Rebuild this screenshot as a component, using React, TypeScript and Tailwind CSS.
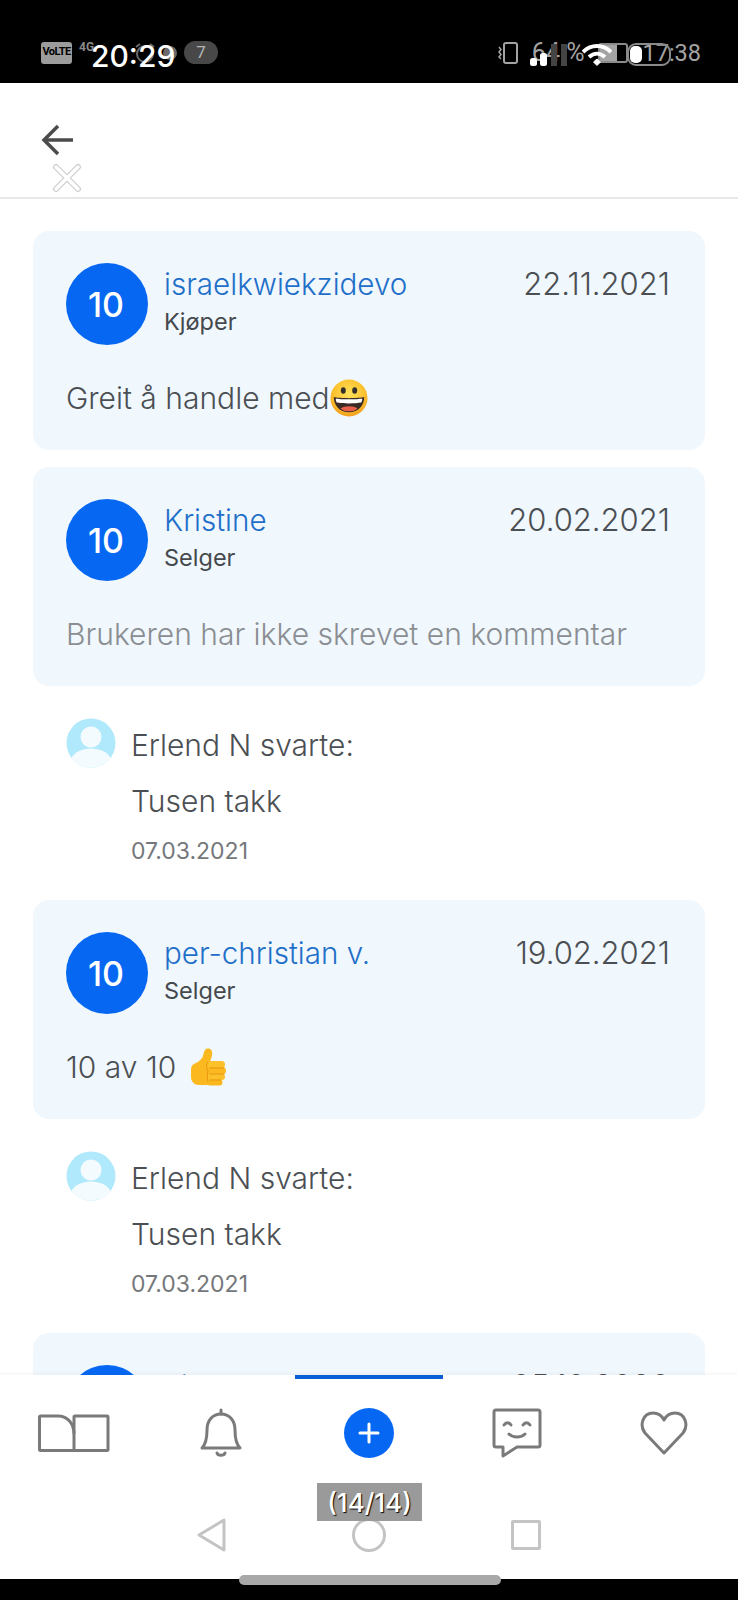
const font = { fontFamily: 'Inter, "Noto Sans", sans-serif' }

function Grin() {
  return (
    <svg width="38" height="38" viewBox="0 0 40 40" className="shrink-0">
      <defs>
        <radialGradient id="grin" cx="50%" cy="40%" r="60%">
          <stop offset="0%" stopColor="#fde15c" />
          <stop offset="70%" stopColor="#fcc22f" />
          <stop offset="100%" stopColor="#f29d1c" />
        </radialGradient>
      </defs>
      <circle cx="20" cy="20" r="19.500" fill="url(#grin)" />
      <ellipse cx="14" cy="12" rx="2.600" ry="3.400" fill="#33302c" />
      <ellipse cx="26" cy="12" rx="2.600" ry="3.400" fill="#33302c" />
      <path d="M4 19c5 1.600 27 1.600 32 0c0 9-6 16-16 16S4 28 4 19z" fill="#3a2a25" />
      <path d="M6 20.500c5 1.200 23 1.200 28 0c0 1.500-.3 3-1 4.300c-6 1.200-20 1.200-26 0c-.7-1.300-1-2.800-1-4.300z" fill="#fff" />
      <path d="M11 31c4-3 14-3 18 0c-2.200 2-5.500 3-9 3s-6.800-1-9-3z" fill="#e8604c" />
    </svg>
  )
}

function Thumb() {
  return (
    <svg width="36" height="38" viewBox="0 0 36 38" className="shrink-0">
      <path d="M1 21c0-3 2-5 5-6c3-1.500 6-4 7-7c.8-2.500 1-7 4.500-7.500c3.500-.4 5 2.500 4.700 5.500c-.2 2.500-1.200 5-2 7H22v24H9c-4.500 0-8-3.500-8-8z" fill="#fbb81f" />
      <rect x="17" y="13" width="18" height="7" rx="3.500" fill="#fcc02a" />
      <rect x="17" y="19.500" width="19" height="6.500" rx="3.250" fill="#fbb81f" />
      <rect x="17" y="25.500" width="18" height="6.500" rx="3.250" fill="#fcc02a" />
      <rect x="17" y="31.500" width="15.500" height="6" rx="3" fill="#fbb81f" />
      <path d="M20 20h14M20 26h14M20 32h11" stroke="#e8960f" strokeWidth="1" strokeLinecap="round" fill="none" />
      <path d="M18 14c-2 3-2 6 0 9c-1 3-1 7 0 11" stroke="#e8960f" strokeWidth="1" fill="none" />
    </svg>
  )
}

function ReplyAvatar() {
  return (
    <svg width="50" height="50" viewBox="0 0 50 50" className="shrink-0">
      <circle cx="25" cy="25" r="24.500" fill="#b0e9fb" />
      <circle cx="25" cy="19" r="10.500" fill="#f4fbfe" />
      <path d="M5.500 40c3-6 11-9.500 19.500-9.500s16.500 3.500 19.500 9.500c-4.500 5.800-11.500 9.500-19.500 9.500S10 45.800 5.500 40z" fill="#f4fbfe" />
    </svg>
  )
}

function Review({
  name,
  role,
  date,
  children,
}: {
  name: string
  role: string
  date: string
  children: React.ReactNode
}) {
  return (
    <section className="bg-[#f0f7fd] rounded-[16px] h-[219px] pl-[33px] pr-[35px] pt-[32px]">
      <div className="flex">
        <div className="w-[82px] h-[82px] rounded-full bg-[#0668f2] text-white flex items-center justify-center text-[34px] font-medium pr-[2px]">
          10
        </div>
        <div className="ml-[16px] flex-1 pt-[1px]">
          <div className="flex justify-between items-start">
            <span className="text-[#1f6fc9] text-[29.600px] font-light leading-[40px]">{name}</span>
            <span className="text-[#4b4f53] text-[31px] font-light leading-[40px]">{date}</span>
          </div>
          <div className="text-[#45494d] text-[23.500px] leading-[30px] mt-[3px]">{role}</div>
        </div>
      </div>
      <div className="mt-[32px] h-[42px] flex items-center">{children}</div>
    </section>
  )
}

function Reply() {
  return (
    <div className="flex h-[197px] px-[33px] pt-[32px]">
      <ReplyAvatar />
      <div className="ml-[15px] pt-[6px] font-light text-[30px] leading-[42px] text-[#4b4f53]">
        <div>Erlend N svarte:</div>
        <div className="mt-[14px]">Tusen takk</div>
        <div className="text-[#75787b] text-[23px] font-normal leading-[30px] mt-[14px]">07.03.2021</div>
      </div>
    </div>
  )
}

function StatusBar() {
  return (
    <header className="h-[83px] bg-black shrink-0 grid text-[#a3a3a3]" style={{ fontFamily: 'Roboto, sans-serif' }}>
      {/* the screenshot has two status bars on top of each other */}
      <div className="[grid-area:1/1] flex justify-between items-start pt-[41px] pl-[41px] pr-[37px]">
        <div className="flex items-center gap-[7px]">
          <span className="w-[31px] h-[22px] rounded-[3px] bg-[#9c9c9c] text-black text-[11px] font-bold flex items-center justify-center tracking-tighter">
            VoLTE
          </span>
          <div className="w-[24px] h-[23px] text-[12px] font-bold leading-[12px] text-[#8a8a8a]">4G</div>
          <svg width="67" height="23" viewBox="0 0 67 23" fill="none" stroke="#6a6a6a" strokeWidth="2">
            <circle cx="35" cy="13" r="8" />
            <path d="M30 3l-4 3M40 3l4 3" />
            <circle cx="60" cy="12" r="6" fill="#6a6a6a" />
          </svg>
          <span className="w-[34px] h-[23px] rounded-full bg-[#484848] text-[#b5b5b5] text-[17px] flex items-center justify-center">
            7
          </span>
        </div>
        <div className="flex items-center gap-[14px]">
          <svg width="21" height="22" viewBox="0 0 21 22" fill="none" stroke="#a3a3a3" strokeWidth="2">
            <rect x="7" y="1" width="13" height="20" rx="2" />
            <path d="M2 5l2 2.500l-2 2.500l2 2.500l-2 2.500l2 2" strokeWidth="1.500" />
          </svg>
          <span className="text-[25px] leading-[24px] whitespace-nowrap">64 %</span>
          <div className="w-[30px] h-[20px] rounded-[3px] border-2 border-[#8a8a8a] flex">
            <div className="w-[17px] bg-[#a3a3a3]" />
          </div>
          <span className="text-[23.500px] leading-[24px] whitespace-nowrap">17:38</span>
        </div>
      </div>

      <div className="[grid-area:1/1] flex justify-between items-start pt-[36px] pl-[91px] pr-[67px]">
        <span className="text-white text-[30px] font-medium leading-[40px]" style={font}>20:29</span>
        <div className="flex items-center gap-[15px] pt-[7px]">
          <svg width="37" height="22" viewBox="0 0 37 22">
            <rect x="0" y="14" width="7" height="8" rx="2.500" fill="#fff" />
            <rect x="10" y="9" width="7" height="13" rx="2.500" fill="#fff" />
            <rect x="21" y="0" width="6" height="22" fill="#444" />
            <rect x="31" y="0" width="6" height="22" fill="#444" />
          </svg>
          <svg width="30" height="23" viewBox="0 0 30 23" fill="none" stroke="#fff" strokeWidth="4">
            <path d="M1 9c8-8 20-8 28 0" />
            <path d="M7 14c5-4.500 11-4.500 16 0" />
            <path d="M11.500 19l3.500-3l3.500 3l-3.500 3.500z" fill="#fff" strokeWidth="1" />
          </svg>
          <div className="w-[44px] h-[23px] rounded-[9px] border-2 border-[#8a8a8a] pl-[1px] pt-[1px]">
            <div className="w-[12px] h-[17px] rounded-[5px] bg-white" />
          </div>
        </div>
      </div>
    </header>
  )
}

export default function App() {
  return (
    <div className="relative w-[738px] h-[1600px] overflow-hidden bg-white flex flex-col" style={font}>
      <StatusBar />

      <div className="h-[116px] shrink-0 border-b-2 border-[#e8e8e8] pl-[41px] pt-[41px]">
        <svg width="32" height="32" viewBox="0 0 32 32" fill="none" stroke="#4b4b4b" strokeWidth="3.500">
          <path d="M32 16H3" />
          <path d="M17 2L3 16l14 14" />
        </svg>
      </div>

      <main className="flex-1 overflow-hidden px-[33px] pt-[32px] min-h-0">
        <Review name="israelkwiekzidevo" role="Kjøper" date="22.11.2021">
          <span className="text-[#4b4f53] text-[30px] font-light">Greit å handle med</span>
          <Grin />
        </Review>
        <div className="mt-[17px]">
          <Review name="Kristine" role="Selger" date="20.02.2021">
            <span className="text-[#8a8e92] text-[30px] font-light">Brukeren har ikke skrevet en kommentar</span>
          </Review>
        </div>
        <Reply />
        <div className="mt-[17px]">
          <Review name="per-christian v." role="Selger" date="19.02.2021">
            <span className="text-[#4b4f53] text-[30px] font-light mr-[14px]">10 av 10</span>
            <Thumb />
          </Review>
        </div>
        <Reply />
        <div className="mt-[17px]">
          <Review name="Lise Skar" role="Selger" date="05.10.2020">
            <span />
          </Review>
        </div>
      </main>

      <nav className="h-[116px] shrink-0 bg-white relative shadow-[0_-2px_3px_rgba(0,0,0,0.03)] grid grid-cols-5 justify-items-center items-center">
        <svg width="72" height="38" viewBox="0 0 72 38" fill="none" stroke="#7a7a7a" strokeWidth="3" strokeLinejoin="round">
          <path d="M36 36.500H2.500a1 1 0 0 1-1-1V3a1 1 0 0 1 1-1H20c10 0 16 8 16 18z" />
          <path d="M36 20V3a1 1 0 0 1 1-1h32a1 1 0 0 1 1 1v32.500a1 1 0 0 1-1 1H36" />
        </svg>
        <svg width="42" height="50" viewBox="0 0 42 50" fill="none" stroke="#7a7a7a" strokeWidth="3" strokeLinecap="round" strokeLinejoin="round">
          <path d="M21 2v4" />
          <path d="M2 40c4-4 5-9 5-18c0-10 6-16 14-16s14 6 14 16c0 9 1 14 5 18z" />
          <path d="M17 45c1 3 7 3 8 0" />
        </svg>
        <div className="w-[50px] h-[50px] rounded-full bg-[#0668f2] text-white flex items-center justify-center">
          <svg width="22" height="22" viewBox="0 0 22 22" stroke="#fff" strokeWidth="3" strokeLinecap="round">
            <path d="M11 2v18M2 11h18" />
          </svg>
        </div>
        <svg width="50" height="50" viewBox="0 0 50 50" fill="none" stroke="#7a7a7a" strokeWidth="3" strokeLinecap="round" strokeLinejoin="round">
          <path d="M4 2h42a2 2 0 0 1 2 2v33a2 2 0 0 1-2 2H25L11 48l0-9H4a2 2 0 0 1-2-2V4a2 2 0 0 1 2-2z" />
          <path d="M12 17c2-3 5-3 7 0M31 17c2-3 5-3 7 0" />
          <path d="M17 26c4 4 12 4 16 0" />
        </svg>
        <svg width="48" height="44" viewBox="0 0 48 44" fill="none" stroke="#7a7a7a" strokeWidth="3" strokeLinejoin="round">
          <path d="M24 42L5 22C-1 14 3 2 13 2c5 0 9 3 11 7c2-4 6-7 11-7c10 0 14 12 8 20z" />
        </svg>
      </nav>

      <div className="h-[88px] shrink-0 bg-white flex items-center justify-center gap-[125px]">
        <svg width="30" height="34" viewBox="0 0 30 34" fill="none" stroke="#c4c4c4" strokeWidth="3" strokeLinejoin="round">
          <path d="M27 2v30L2 17z" />
        </svg>
        <div className="w-[34px] h-[34px] rounded-full border-[3px] border-[#c4c4c4]" />
        <div className="w-[30px] h-[30px] rounded-[2px] border-[3px] border-[#c4c4c4]" />
      </div>
      <div className="h-[21px] shrink-0 bg-black" />

      {/* overlays burned into the screenshot */}
      <svg width="30" height="30" viewBox="0 0 30 30" fill="none" className="absolute left-[52px] top-[163px]">
        <path d="M4 4l22 22M26 4L4 26" stroke="#cfcfcf" strokeWidth="6" strokeLinecap="round" />
        <path d="M4 4l22 22M26 4L4 26" stroke="#fff" strokeWidth="3.500" strokeLinecap="round" />
      </svg>
      <div className="absolute left-[295px] top-[1375px] w-[148px] h-[4px] bg-[#0a5fd6]" />
      <div className="absolute left-[317px] top-[1483px] w-[105px] h-[38px] bg-[#9a9a9a] text-white text-[26px] font-medium flex items-center justify-center [text-shadow:1px_1px_1px_#000]">
        (14/14)
      </div>
      <div className="absolute left-[239px] top-[1575px] w-[262px] h-[10px] rounded-full bg-[#a8a8a8]" />
    </div>
  )
}
